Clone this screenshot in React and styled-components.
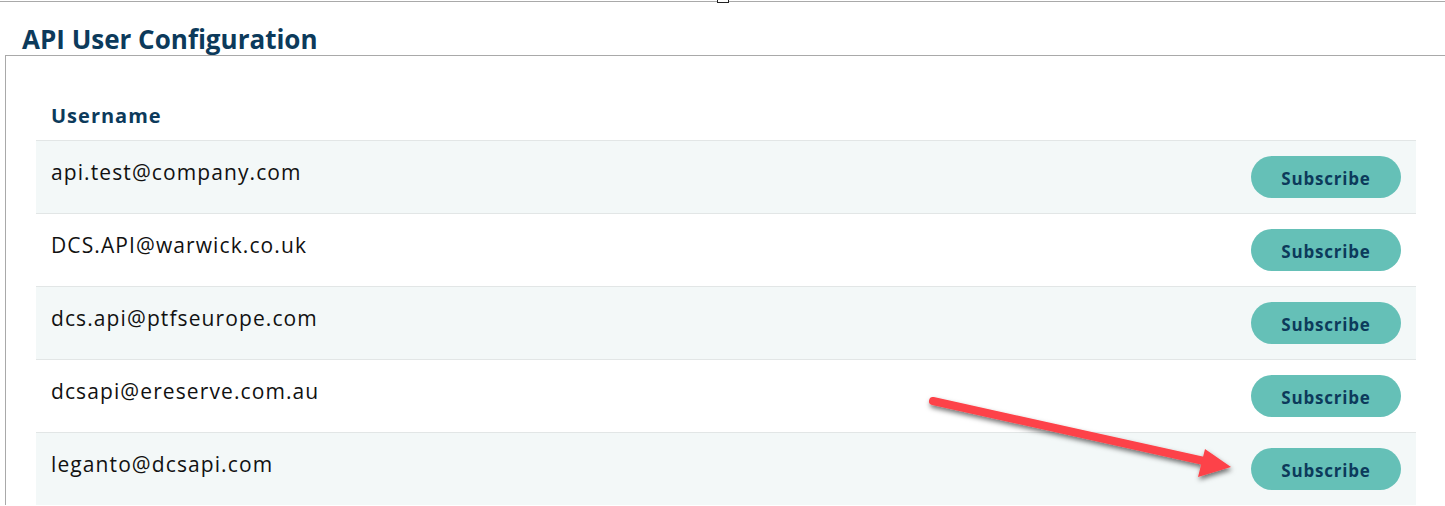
import { createGlobalStyle, styled } from "styled-components";

const GlobalStyle = createGlobalStyle`
  html, body {
    margin: 0;
    padding: 0;
    background: #ffffff;
  }
  body {
    font-family: "Open Sans", "Liberation Sans", sans-serif;
    color: #111111;
  }
`;

const Page = styled.div`
  position: relative;
  width: 1445px;
  height: 506px;
  overflow: hidden;
`;

const TopRule = styled.div`
  position: relative;
  height: 1px;
  margin-top: 1px;
  background: #a9a9a9;
`;

const Handle = styled.span`
  position: absolute;
  left: 717px;
  top: -2px;
  width: 10px;
  height: 3px;
  border: 1px solid #222;
  border-top: none;
  background: #fff;
`;

const Title = styled.h2`
  margin: 0;
  padding: 20px 0 0 22px;
  height: 33px;
  font-size: 26px;
  font-weight: 700;
  line-height: 34px;
  letter-spacing: 0;
  color: #0c3a5b;
`;

const Panel = styled.section`
  margin-left: 5px;
  border-top: 1px solid #a9a9a9;
  border-left: 1px solid #a9a9a9;
  padding: 0 29px 0 30px;
`;

const HeaderCell = styled.div`
  height: 84px;
  box-sizing: border-box;
  padding: 46px 0 0 15px;
  font-size: 20px;
  font-weight: 700;
  line-height: 28px;
  letter-spacing: 1px;
  color: #0c3a5b;
`;

const Row = styled.div`
  display: flex;
  align-items: center;
  justify-content: space-between;
  height: 73px;
  box-sizing: border-box;
  border-top: 1px solid #e2e6e6;
  padding: 0 15px;
  background: ${(p) => (p.$shaded ? "#f3f8f8" : "#ffffff")};
`;

const Email = styled.span`
  font-size: 21px;
  line-height: 28px;
  letter-spacing: 1.1px;
  color: #111111;
  margin-bottom: 11px;
`;

const SubscribeButton = styled.button`
  width: 150px;
  height: 42px;
  border: none;
  border-radius: 21px;
  background: #65c0b7;
  color: #0c3a5b;
  font-family: inherit;
  font-size: 17px;
  font-weight: 700;
  letter-spacing: 0.8px;
  padding: 2px 0 0;
  cursor: pointer;
`;

const Arrow = styled.svg`
  position: absolute;
  left: 0;
  top: 0;
  pointer-events: none;
`;

const users = [
  "api.test@company.com",
  "DCS.API@warwick.co.uk",
  "dcs.api@ptfseurope.com",
  "dcsapi@ereserve.com.au",
  "leganto@dcsapi.com",
];

export default function App() {
  return (
    <Page>
      <GlobalStyle />
      <TopRule>
        <Handle />
      </TopRule>
      <Title>API User Configuration</Title>
      <Panel>
        <HeaderCell>Username</HeaderCell>
        {users.map((u, i) => (
          <Row key={u} $shaded={i % 2 === 0}>
            <Email>{u}</Email>
            <SubscribeButton>Subscribe</SubscribeButton>
          </Row>
        ))}
      </Panel>
      <Arrow width="1445" height="506" viewBox="0 0 1445 506">
        <defs>
          <filter id="shadow" x="-10%" y="-50%" width="120%" height="200%">
            <feDropShadow dx="1" dy="3" stdDeviation="2.5" floodColor="#000" floodOpacity="0.55" />
          </filter>
        </defs>
        <g filter="url(#shadow)">
          <line x1="933" y1="401" x2="1204" y2="461" stroke="#fd4248" strokeWidth="8" strokeLinecap="round" />
          <polygon points="1205,449 1231,467 1198,477" fill="#fd4248" />
        </g>
      </Arrow>
    </Page>
  );
}
